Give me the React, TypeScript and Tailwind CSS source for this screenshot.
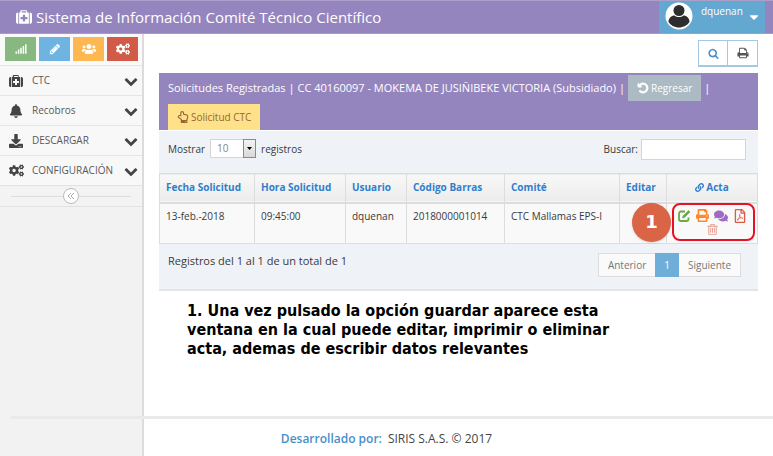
import type { ReactNode } from "react";
import {
  FaBell,
  FaCaretDown,
  FaCogs,
  FaComments,
  FaDownload,
  FaLink,
  FaPrint,
  FaRegFilePdf,
  FaRegHandPointUp,
  FaSignal,
  FaUsers,
} from "react-icons/fa";

const glyphs = {
  medkit:
    "M1280 1120v-192q0-14-9-23t-23-9h-224v-224q0-14-9-23t-23-9h-192q-14 0-23 9t-9 23v224h-224q-14 0-23 9t-9 23v192q0 14 9 23t23 9h224v224q0 14 9 23t23 9h192q14 0 23-9t9-23v-224h224q14 0 23-9t9-23zm-640-736h512v-128h-512v128zm-384 0v1280h-32q-92 0-158-66t-66-158v-832q0-92 66-158t158-66h32zm1184 0v1280h-1088v-1280h128v-160q0-40 28-68t68-28h576q40 0 68 28t28 68v160h128zm352 224v832q0 92-66 158t-158 66h-32v-1280h32q92 0 158 66t66 158z",
  pencil:
    "M491 1536l91-91-235-235-91 91v107h128v128h107zm523-928q0-22-22-22-10 0-17 7l-542 542q-7 7-7 17 0 22 22 22 10 0 17-7l542-542q7-7 7-17zm-54-192l416 416-832 832h-416v-416zm683 96q0 53-37 90l-166 166-416-416 166-165q36-38 90-38 53 0 91 38l235 234q37 39 37 91z",
  chevron:
    "M1683 808l-742 741q-19 19-45 19t-45-19l-742-741q-19-19-19-45.5t19-45.5l166-165q19-19 45-19t45 19l531 531 531-531q19-19 45-19t45 19l166 165q19 19 19 45.5t-19 45.5z",
  search:
    "M1216 832q0-185-131.5-316.5t-316.5-131.5-316.5 131.5-131.5 316.5 131.5 316.5 316.5 131.5 316.5-131.5 131.5-316.5zm512 832q0 52-38 90t-90 38q-54 0-90-38l-343-342q-179 124-399 124-143 0-273.5-55.5t-225-150-150-225-55.5-273.5 55.5-273.5 150-225 225-150 273.5-55.5 273.5 55.5 225 150 150 225 55.5 273.5q0 220-124 399l343 343q37 37 37 90z",
  print:
    "M448 1536h896v-256h-896v256zm0-640h896v-384h-160q-40 0-68-28t-28-68v-160h-640v640zm1152 64q0-26-19-45t-45-19-45 19-19 45 19 45 45 19 45-19 19-45zm128 0v416q0 13-9.5 22.5t-22.5 9.5h-224v160q0 40-28 68t-68 28h-960q-40 0-68-28t-28-68v-160h-224q-13 0-22.5-9.5t-9.5-22.5v-416q0-79 56.5-135.5t135.5-56.5h64v-544q0-40 28-68t68-28h672q40 0 88 20t76 48l152 152q28 28 48 76t20 88v256h64q79 0 135.5 56.5t56.5 135.5z",
  undo:
    "M1664 896q0 156-61 298t-164 245-245 164-298 61q-172 0-327-72.5t-264-204.5q-7-10-6.5-22.5t8.5-20.5l137-138q10-9 25-9 16 2 23 12 73 95 179 147t225 52q104 0 198.5-40.5t163.5-109.5 109.5-163.5 40.5-198.5-40.5-198.5-109.5-163.5-163.5-109.5-198.5-40.5q-98 0-188 35.5t-160 101.5l137 138q31 30 14 69-17 40-59 40h-448q-26 0-45-19t-19-45v-448q0-42 40-59 39-17 69 14l130 129q107-101 244.5-156.5t284.5-55.5q156 0 298 61t245 164 164 245 61 298z",
  trash:
    "M704 736v576q0 14-9 23t-23 9h-64q-14 0-23-9t-9-23v-576q0-14 9-23t23-9h64q14 0 23 9t9 23zm256 0v576q0 14-9 23t-23 9h-64q-14 0-23-9t-9-23v-576q0-14 9-23t23-9h64q14 0 23 9t9 23zm256 0v576q0 14-9 23t-23 9h-64q-14 0-23-9t-9-23v-576q0-14 9-23t23-9h64q14 0 23 9t9 23zm128 724v-948h-896v948q0 22 7 40.5t14.5 27 10.5 8.5h832q3 0 10.5-8.5t14.5-27 7-40.5zm-672-1076h448l-48-117q-7-9-17-11h-317q-10 2-17 11zm928 32v64q0 14-9 23t-23 9h-96v948q0 83-47 143.5t-113 60.5h-832q-66 0-113-58.5t-47-141.5v-952h-96q-14 0-23-9t-9-23v-64q0-14 9-23t23-9h309l70-167q15-37 54-63t79-26h320q40 0 79 26t54 63l70 167h309q14 0 23 9t9 23z",
};

function Glyph({ name, className }: { name: keyof typeof glyphs; className: string }) {
  return (
    <svg viewBox="0 0 1792 1792" fill="currentColor" aria-hidden="true" className={className}>
      <path d={glyphs[name]} />
    </svg>
  );
}

const shortcuts: { label: string; color: string; icon: ReactNode }[] = [
  { label: "Estadísticas", color: "bg-[#87b87f]", icon: <FaSignal className="size-3" /> },
  { label: "Editar", color: "bg-[#6fb3e0]", icon: <Glyph name="pencil" className="size-3" /> },
  { label: "Usuarios", color: "bg-[#ffb752]", icon: <FaUsers className="size-[14px]" /> },
  { label: "Ajustes", color: "bg-[#d15b47]", icon: <FaCogs className="size-[14px]" /> },
];

const menu: { label: string; icon: ReactNode }[] = [
  { label: "CTC", icon: <Glyph name="medkit" className="size-[14px]" /> },
  { label: "Recobros", icon: <FaBell className="size-[14px]" /> },
  { label: "DESCARGAR", icon: <FaDownload className="size-[14px]" /> },
  { label: "CONFIGURACIÓN", icon: <FaCogs className="size-[15px]" /> },
];

const columns = [
  { label: "Fecha Solicitud", width: "w-[95px]" },
  { label: "Hora Solicitud", width: "w-[91px]" },
  { label: "Usuario", width: "w-[61px]" },
  { label: "Código Barras", width: "w-[98px]" },
  { label: "Comité", width: "" },
  { label: "Editar", width: "w-[47px]" },
];

const values = ["13-feb.-2018", "09:45:00", "dquenan", "2018000001014", "CTC Mallamas EPS-I"];

function Header() {
  return (
    <header className="flex h-[34px] border-t border-b border-t-[#aaa0ca] border-b-[#a79cc9] bg-[#9585bf] pr-2 text-white">
      <h1 className="flex grow items-center gap-1 pl-4 text-[15px]">
        <Glyph name="medkit" className="size-4" />
        Sistema de Información Comité Técnico Científico
      </h1>
      <button type="button" className="flex w-[106px] bg-[#62a8d1] pl-[6px] text-[10px]">
        <svg viewBox="0 0 28 28" aria-hidden="true" className="mt-px size-7">
          <circle cx="14" cy="14" r="13.5" fill="#fff" />
          <circle cx="14" cy="8.5" r="5.5" fill="#2d2d2d" />
          <path d="M3.500 20c0-4 3-6.500 6-6.500 2.500 2 6.500 2 9 0 3 0 6 2.500 6 6.500-2 3-6 5.500-10.500 5.500s-8.500-2.500-10.500-5.500z" fill="#2d2d2d" />
        </svg>
        <span className="pt-[3px] pl-2">dquenan</span>
        <FaCaretDown className="mt-[9px] ml-1 size-[14px]" />
      </button>
    </header>
  );
}

function Sidebar() {
  return (
    <aside className="col-start-1 row-span-2 row-start-1 border-r-2 border-[#dcdcdc] bg-[#f2f2f2] text-[#585858]">
      <div className="flex h-[31px] gap-[3px] bg-[#fafafa] pt-[3px] pr-1 pl-[5px]">
        {shortcuts.map((s) => (
          <button
            key={s.label}
            type="button"
            aria-label={s.label}
            className={`flex h-6 grow basis-0 items-center justify-center text-white ${s.color}`}
          >
            {s.icon}
          </button>
        ))}
      </div>
      <nav>
        {menu.map((m) => (
          <a
            key={m.label}
            href="#"
            className="flex h-[30px] items-center border-t border-[#e5e5e5] bg-[#f8f8f8] pr-1 text-[10px]"
          >
            <span className="flex w-8 justify-center text-[#444]">{m.icon}</span>
            <span className="grow">{m.label}</span>
            <Glyph name="chevron" className="size-[14px] text-[#444]" />
          </a>
        ))}
      </nav>
      <div className="flex h-[22px] items-center border-y border-[#e2e2e2] bg-[#f3f3f3] px-[11px]">
        <span className="h-px grow bg-[#dedede]" />
        <button
          type="button"
          aria-label="Contraer menú"
          className="flex size-4 items-center justify-center rounded-full border border-[#bbb] bg-white text-[#aaa]"
        >
          <svg viewBox="0 0 8 8" fill="none" stroke="currentColor" aria-hidden="true" className="size-2">
            <path d="M4 1 1 4l3 3M7 1 4 4l3 3" />
          </svg>
        </button>
        <span className="h-px grow bg-[#dedede]" />
      </div>
    </aside>
  );
}

function Records() {
  return (
    <section className="border-b-2 border-[#e2e4e8] bg-[#eff3f8] text-[#393939]">
      <div className="bg-[#9585bf] pt-[2px] pr-2 pl-[9px] text-[11px] text-white">
        <div className="flex items-center gap-[3px]">
          <h2 className="flex gap-[3px]">
            <span>Solicitudes Registradas</span>
            <span>|</span>
            <span>CC 40160097 - MOKEMA DE JUSIÑIBEKE VICTORIA (Subsidiado)</span>
          </h2>
          <span>|</span>
          <button type="button" className="flex h-[26px] items-center gap-[2px] bg-[#abbac3] px-[9px] text-[10px]">
            <Glyph name="undo" className="size-3 stroke-current stroke-[90]" />
            Regresar
          </button>
          <span>|</span>
        </div>
        <button
          type="button"
          className="mt-[3px] flex h-[26px] items-center gap-[2px] bg-[#fee188] px-[9px] text-[10px] text-[#996633]"
        >
          <FaRegHandPointUp className="size-3" />
          Solicitud CTC
        </button>
      </div>

      <div className="flex items-start border-t border-white px-[9px] pt-2 pb-[13px] pr-3 text-[10px]">
        <label htmlFor="page-size" className="leading-5">
          Mostrar
        </label>
        <span className="relative mx-[5px]">
          <select
            id="page-size"
            className="h-[19px] w-[46px] appearance-none border border-[#d5d5d5] bg-white pl-[6px] text-[10px] text-[#858585]"
          >
            <option>10</option>
          </select>
          <span className="pointer-events-none absolute top-0 right-0 flex h-[19px] w-[13px] items-center justify-center border border-[#8a8a8a] bg-linear-to-b from-[#f4f4f4] to-[#d8d8d8] text-black">
            <svg viewBox="0 0 5 3" fill="currentColor" aria-hidden="true" className="w-[5px]">
              <path d="M0 0h5L2.500 3z" />
            </svg>
          </span>
        </span>
        <span className="grow leading-5">registros</span>
        <label htmlFor="filter" className="pr-[3px] leading-5">
          Buscar:
        </label>
        <input id="filter" type="text" className="h-[21px] w-[105px] border border-[#d5d5d5] bg-white px-1" />
      </div>

      <table className="w-full table-fixed border-collapse text-left text-[10px]">
        <thead>
          <tr className="h-[29px] border-t border-b-2 border-[#ddd] bg-linear-to-b from-[#f8f8f8] to-[#ececec] text-[#307ecc]">
            {columns.map((c) => (
              <th key={c.label} className={`border-x border-[#ddd] px-[6px] ${c.width}`}>
                {c.label}
              </th>
            ))}
            <th className="w-[91px] border-x border-[#ddd]">
              <span className="flex items-center justify-center gap-[2px]">
                <FaLink className="size-[9px]" />
                Acta
              </span>
            </th>
          </tr>
        </thead>
        <tbody>
          <tr className="h-[41px] border-b border-[#ddd] bg-[#f9f9f9] align-top">
            {values.map((v) => (
              <td key={v} className="border-x border-[#ddd] px-[6px] pt-[5px]">
                {v}
              </td>
            ))}
            <td className="border-x border-[#ddd]" />
            <td className="relative border-x border-[#ddd] p-0">
              <div className="flex flex-wrap items-center justify-center gap-x-[5px] px-2 pt-[5px]">
                <button type="button" aria-label="Editar acta" className="text-[#69aa46]">
                  <svg viewBox="0 0 14 14" fill="none" stroke="currentColor" aria-hidden="true" className="size-[14px]">
                    <path d="M8 2.500H4a2 2 0 0 0-2 2V10a2 2 0 0 0 2 2h5.500a2 2 0 0 0 2-2V8.500" strokeWidth="1.800" />
                    <path d="M5.500 9 6 7l5.500-5.500L13 3 7.500 8.500z" fill="currentColor" strokeWidth="0.6" />
                  </svg>
                </button>
                <button type="button" aria-label="Imprimir acta" className="text-[#ff892a]">
                  <FaPrint className="size-[13px]" />
                </button>
                <button type="button" aria-label="Comentarios" className="text-[#a069c3]">
                  <FaComments className="size-[14px]" />
                </button>
                <button type="button" aria-label="Acta en PDF" className="text-[#dd5a43]">
                  <FaRegFilePdf className="size-[14px]" />
                </button>
                <button type="button" aria-label="Eliminar acta" className="text-[#e59a8c]">
                  <Glyph name="trash" className="size-[13px]" />
                </button>
              </div>
              <span className="pointer-events-none absolute -top-px right-[2px] h-[38px] w-[83px] rounded-lg border-2 border-[#e81123]" />
              <span className="pointer-events-none absolute -top-px right-[86px] flex size-[39px] items-center justify-center rounded-full bg-[#d96546] font-['DejaVu_Sans',sans-serif] text-lg font-bold text-white shadow">
                1
              </span>
            </td>
          </tr>
        </tbody>
      </table>

      <div className="flex items-start justify-between px-[9px] pt-[9px] pr-[17px] pb-3">
        <p className="text-[11px]">Registros del 1 al 1 de un total de 1</p>
        <div className="flex h-6 border border-[#ddd] bg-[#fafafa] text-[10px] text-[#777]">
          <button type="button" className="px-[9px]">Anterior</button>
          <button type="button" className="-my-px bg-[#6faed9] px-[9px] text-white">1</button>
          <button type="button" className="px-[9px]">Siguiente</button>
        </div>
      </div>
    </section>
  );
}

export default function App() {
  return (
    <div className="flex min-h-screen flex-col bg-white font-['Open_Sans','Noto_Sans',sans-serif]">
      <Header />
      <div className="grid grow grid-cols-[144px_1fr] grid-rows-[1fr_auto]">
        <Sidebar />
        <main className="col-start-2 row-start-1 pt-[6px] pr-[15px] pl-[15px]">
          <div className="flex justify-end pb-[6px]">
            <button
              type="button"
              aria-label="Buscar"
              className="flex h-[27px] w-[30px] items-center justify-center border border-b-2 border-[#a5c9e2] text-[#478fca]"
            >
              <Glyph name="search" className="size-[11px]" />
            </button>
            <button
              type="button"
              aria-label="Imprimir"
              className="flex h-[27px] w-[30px] items-center justify-center border border-b-2 border-l-0 border-[#a5c9e2] text-[#555]"
            >
              <Glyph name="print" className="size-3" />
            </button>
          </div>
          <Records />
          <p className="max-w-[470px] pt-[10px] pl-7 font-['DejaVu_Sans_Condensed','DejaVu_Sans',sans-serif] text-base leading-[19px] font-bold text-black">
            1. Una vez pulsado la opción guardar aparece esta ventana en la cual puede editar, imprimir o eliminar acta,
            ademas de escribir datos relevantes
          </p>
        </main>
        <footer className="col-span-2 col-start-1 row-start-2 ml-[10px] flex h-10 justify-center gap-[6px] border-t-3 border-[#eaeaea] pt-3 pr-[10px] text-xs text-[#444]">
          <span className="font-semibold text-[#478fca]">Desarrollado por:</span>
          <span>SIRIS S.A.S. © 2017</span>
        </footer>
      </div>
    </div>
  );
}
